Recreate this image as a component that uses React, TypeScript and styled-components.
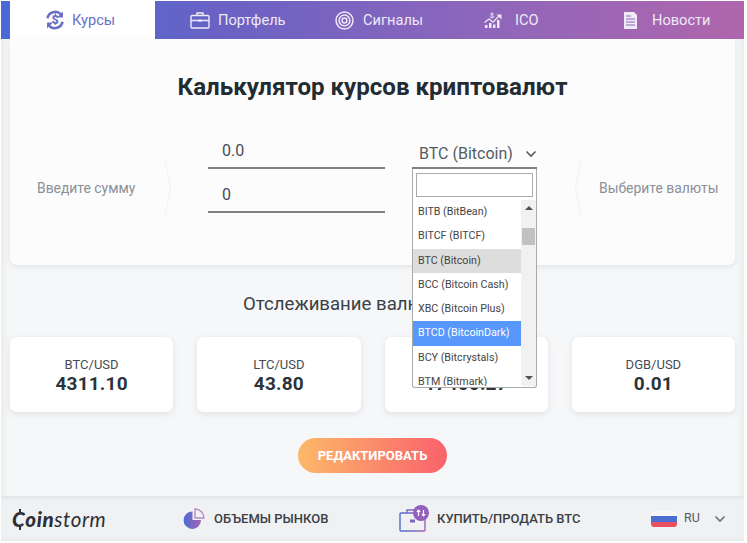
import styled, { createGlobalStyle } from 'styled-components';

const GlobalStyle = createGlobalStyle`
  html, body {
    margin: 0;
    padding: 0;
    background: #fff;
    font-family: Roboto, "Noto Sans", sans-serif;
  }
`;

const Page = styled.div`
  width: 748px;
  height: 543px;
  box-sizing: border-box;
  padding: 1px 3px 2px 1px;
  overflow: hidden;
  border-right: 1px solid #d4d6d8;
`;

const Frame = styled.div`
  height: 100%;
  display: flex;
  flex-direction: column;
  background: #f6f7f8;
  box-shadow: inset 9px 0 6px -6px #e9ebec, inset -9px 0 6px -6px #e9ebec;
`;

const Nav = styled.nav`
  display: flex;
  height: 38px;
  flex: none;
  padding-left: 9px;
  background: linear-gradient(90deg, #4a6ad6 0%, #6a62c4 30%, #8e66bb 65%, #b066ac 100%);
`;

const Tab = styled.div<{ $active?: boolean; $gap: number; $pad?: number }>`
  width: 145px;
  box-sizing: border-box;
  display: flex;
  align-items: center;
  gap: ${(p) => p.$gap}px;
  padding-left: ${(p) => p.$pad ?? 35}px;
  font-size: 14.6px;
  color: ${(p) => (p.$active ? '#6a70c8' : '#f0e9f6')};
  background: ${(p) => (p.$active ? '#fff' : 'transparent')};
`;

const Card = styled.section`
  margin: 0 9px;
  height: 226px;
  flex: none;
  box-sizing: border-box;
  padding-top: 34px;
  background: #fcfcfd;
  border-radius: 0 0 7px 7px;
  box-shadow: 0 2px 5px rgba(120, 130, 140, 0.16);
`;

const Title = styled.h1`
  margin: 0 0 24px;
  text-align: center;
  font-size: 24.1px;
  line-height: 28px;
  font-weight: 700;
  color: #232b33;
`;

const CalcRow = styled.div`
  display: flex;
  align-items: flex-start;
  height: 85px;
`;

const Hint = styled.div<{ $width: number; $pad: number }>`
  width: ${(p) => p.$width}px;
  flex: none;
  box-sizing: border-box;
  padding-left: ${(p) => p.$pad}px;
  margin-top: 54px;
  font-size: 13.9px;
  line-height: 18px;
  color: #8b9197;
  white-space: nowrap;
`;

const Divider = styled.svg<{ $after: number }>`
  flex: none;
  margin-top: 36px;
  margin-right: ${(p) => p.$after}px;
`;

const Inputs = styled.div`
  width: 177px;
  flex: none;
  margin-right: 27px;
`;

const NumberField = styled.div`
  height: 44px;
  box-sizing: border-box;
  padding: 15px 0 0 14px;
  font-size: 16px;
  line-height: 22px;
  color: #454c53;
  border-bottom: 2px solid #7c8184;
`;

const SelectWrap = styled.div`
  position: relative;
  width: 125px;
  flex: none;
  margin-right: 38px;
`;

const SelectValue = styled.div`
  height: 44px;
  box-sizing: border-box;
  display: flex;
  align-items: center;
  justify-content: space-between;
  padding: 15px 0 0 7px;
  font-size: 16px;
  color: #555b60;
  border-bottom: 2px solid #7c8184;
`;

const Dropdown = styled.div`
  position: absolute;
  top: 44px;
  left: 0;
  width: 125px;
  height: 219px;
  box-sizing: border-box;
  background: #fff;
  border: 1px solid #aaa;
  border-top: 0;
  border-radius: 0 0 3px 3px;
  overflow: hidden;
  z-index: 5;
`;

const Search = styled.div`
  height: 24px;
  margin: 4px 3px 3px;
  box-sizing: border-box;
  border: 1px solid #aaa;
  background: #fff;
`;

const ListArea = styled.div`
  display: flex;
  height: 186px;
`;

const List = styled.ul`
  flex: 1;
  margin: 0;
  padding: 0;
  list-style: none;
  overflow: hidden;
`;

const Option = styled.li<{ $state?: 'selected' | 'hover' }>`
  height: 24.3px;
  line-height: 24.3px;
  padding-left: 5px;
  font-size: 10.7px;
  white-space: nowrap;
  color: ${(p) => (p.$state === 'hover' ? '#fff' : '#444')};
  background: ${(p) =>
    p.$state === 'hover' ? '#5897fb' : p.$state === 'selected' ? '#ddd' : 'transparent'};
`;

const Scrollbar = styled.div`
  position: relative;
  width: 15px;
  flex: none;
  background: #f1f1f1;
`;

const Thumb = styled.div`
  position: absolute;
  top: 28px;
  left: 1px;
  width: 13px;
  height: 17px;
  background: #c1c1c1;
`;

const ArrowUp = styled.div`
  position: absolute;
  top: 6px;
  left: 4px;
  border: 4px solid transparent;
  border-top: 0;
  border-bottom: 4px solid #505050;
`;

const ArrowDown = styled.div`
  position: absolute;
  bottom: 6px;
  left: 4px;
  border: 4px solid transparent;
  border-bottom: 0;
  border-top: 4px solid #505050;
`;

const Heading = styled.h2`
  margin: 27px 0 0;
  text-align: center;
  font-size: 18.6px;
  line-height: 24px;
  font-weight: 400;
  color: #3a4047;
`;

const Pairs = styled.div`
  display: grid;
  grid-template-columns: repeat(4, 1fr);
  gap: 24px;
  margin: 21px 9px 0;
`;

const Pair = styled.div`
  height: 75px;
  box-sizing: border-box;
  padding-top: 21px;
  text-align: center;
  background: #fff;
  border-radius: 7px;
  box-shadow: 0 2px 7px rgba(120, 135, 150, 0.18);
`;

const PairName = styled.div`
  font-size: 13px;
  line-height: 14px;
  color: #454c53;
`;

const PairValue = styled.div`
  font-size: 19px;
  line-height: 24px;
  font-weight: 700;
  color: #2c333a;
  letter-spacing: 0.2px;
`;

const EditButton = styled.button`
  display: block;
  width: 149px;
  height: 35px;
  margin: 26px auto 0;
  padding: 0;
  border: 0;
  border-radius: 18px;
  font-family: inherit;
  font-size: 13px;
  font-weight: 700;
  color: #fff;
  background: linear-gradient(90deg, #fdb869 0%, #f9626c 100%);
`;

const Footer = styled.footer`
  flex: none;
  display: flex;
  align-items: center;
  height: 45px;
  margin-top: 23px;
  padding-left: 11px;
  background: #f0f1f2;
  box-shadow: inset 0 5px 5px -3px #e0e2e4, inset 0 -4px 4px -3px #e3e5e6;
`;

const Logo = styled.div`
  width: 171px;
  flex: none;
  font-family: Lato, Roboto, sans-serif;
  font-size: 20.5px;
  font-style: italic;
  color: #2c3036;
  font-weight: 400;
  letter-spacing: 0.6px;

  b {
    font-weight: 900;
  }
`;

const LogoC = styled.span`
  position: relative;

  &::before,
  &::after {
    content: '';
    position: absolute;
    left: 7px;
    width: 2px;
    height: 3px;
    background: #2c3036;
  }

  &::before {
    top: 2px;
  }

  &::after {
    bottom: 1px;
  }
`;

const FootLink = styled.div<{ $width: number; $gap: number }>`
  width: ${(p) => p.$width}px;
  flex: none;
  display: flex;
  align-items: center;
  gap: ${(p) => p.$gap}px;
  font-size: 13px;
  font-weight: 500;
  color: #3a3f45;
  white-space: nowrap;
`;

const Lang = styled.div`
  display: flex;
  align-items: center;
  font-size: 12.5px;
  color: #555b62;
`;

const LangCode = styled.span`
  margin: -3px 14px 0 7px;
`;

const Flag = styled.div`
  width: 26px;
  height: 16px;
  border-radius: 3px;
  overflow: hidden;
  background: linear-gradient(#f7f7f9 0 33%, #4a6fd0 33% 66%, #e8505f 66%);
`;

const TabIcon = styled.svg`
  flex: none;
  display: block;
`;

const Chevron = ({ color, size }: { color: string; size: number }) => (
  <TabIcon width={size} height={size} viewBox="0 0 12 12" fill="none" stroke={color} strokeWidth="1.6">
    <path d="M1.5 3.5 6 8l4.5-4.5" />
  </TabIcon>
);

const ExchangeIcon = () => (
  <TabIcon width="20" height="20" viewBox="0 0 20 20" fill="none" stroke="#6a70c8" strokeWidth="2.6">
    <path d="M2.5 8.2A7.8 7.8 0 0 1 15.8 4.2" />
    <path d="M17.5 11.8A7.8 7.8 0 0 1 4.2 15.8" />
    <path d="M18 1.5v6h-6zM2 18.5v-6h6z" fill="#6a70c8" stroke="none" />
    <text x="10" y="14.4" textAnchor="middle" fontSize="12.5" fontWeight="900" fill="#6a70c8" stroke="none" fontFamily="Roboto">$</text>
  </TabIcon>
);

const CaseIcon = () => (
  <TabIcon width="20" height="17" viewBox="0 0 20 17" fill="none" stroke="#f0e9f6" strokeWidth="1.4">
    <rect x="1" y="3.5" width="18" height="12.5" rx="1" />
    <path d="M1 8.5h18M7 3.5V1h6v2.5" />
    <rect x="8.5" y="7.5" width="3" height="2.2" fill="#f0e9f6" stroke="none" />
  </TabIcon>
);

const TargetIcon = () => (
  <TabIcon width="19" height="19" viewBox="0 0 19 19" fill="none" stroke="#f0e9f6" strokeWidth="1.5">
    <circle cx="9.5" cy="9.5" r="8.5" />
    <circle cx="9.5" cy="9.5" r="5.4" />
    <circle cx="9.5" cy="9.5" r="2.4" />
  </TabIcon>
);

const GrowthIcon = () => (
  <TabIcon width="18" height="17" viewBox="0 0 18 17" fill="#f0e9f6">
    <path d="M1 16v-3h2.5v3zM5 16v-5h2.5v5zM9 16v-3.5h2.5V16zM13 16V8h2.5v8z" />
    <path d="M.5 10.5 5 7l4 3.2L15 4" fill="none" stroke="#f0e9f6" strokeWidth="1.3" />
    <path d="M12.5 2.5H17.5V7.5z" />
    <text x="8" y="6" textAnchor="middle" fontSize="7" fontWeight="700" fontFamily="Roboto">$</text>
  </TabIcon>
);

const NewsIcon = () => (
  <TabIcon width="13" height="17" viewBox="0 0 13 17">
    <path d="M0 0h10l3 3v14H0z" fill="#f0e9f6" />
    <path d="M2 4h5M2 7h9M2 10h9M2 13h9" stroke="#8f66bb" strokeWidth="1" />
  </TabIcon>
);

const Separator = ({ flip, after }: { flip?: boolean; after: number }) => (
  <Divider $after={after} width="6" height="54" viewBox="0 0 6 54" fill="none" stroke="#eef0f1" strokeWidth="1">
    <path d={flip ? 'M5.5 0 .5 27l5 27' : 'M.5 0l5 27-5 27'} />
  </Divider>
);

const PieIcon = () => (
  <TabIcon width="22" height="22" viewBox="0 0 22 22">
    <defs>
      <linearGradient id="pie" x1="0" y1="0" x2="1" y2="0">
        <stop offset="0" stopColor="#4f6ad4" />
        <stop offset="1" stopColor="#a366b0" />
      </linearGradient>
    </defs>
    <path d="M9.5 3.5V12H18A8.7 8.7 0 1 1 9.5 3.5z" fill="url(#pie)" />
    <path d="M12 1a9 9 0 0 1 9 9h-9z" fill="none" stroke="#b58ac6" strokeWidth="1.4" />
  </TabIcon>
);

const BuyIcon = () => (
  <TabIcon width="30" height="28" viewBox="0 0 30 28">
    <defs>
      <linearGradient id="buy" x1="0" y1="0" x2="1" y2="0">
        <stop offset="0" stopColor="#4f6ad4" />
        <stop offset="1" stopColor="#a366b0" />
      </linearGradient>
    </defs>
    <rect x="1" y="8" width="25" height="18" rx="1" fill="none" stroke="url(#buy)" strokeWidth="1.4" />
    <path d="M1 16h10M16 16h10" fill="none" stroke="url(#buy)" strokeWidth="1.4" />
    <rect x="11" y="14.5" width="5" height="3" fill="#7a68c0" />
    <path d="M8 8V5h10" fill="none" stroke="#7a68c0" strokeWidth="1.4" />
    <circle cx="22" cy="8" r="8" fill="#9360bb" />
    <path d="M19.5 5v6M17.8 6.8l1.7-1.8 1.7 1.8M24.5 11V5M22.8 9.2l1.7 1.8 1.7-1.8" fill="none" stroke="#fff" strokeWidth="1.2" />
  </TabIcon>
);

const options = [
  { label: 'BITB (BitBean)' },
  { label: 'BITCF (BITCF)' },
  { label: 'BTC (Bitcoin)', state: 'selected' as const },
  { label: 'BCC (Bitcoin Cash)' },
  { label: 'XBC (Bitcoin Plus)' },
  { label: 'BTCD (BitcoinDark)', state: 'hover' as const },
  { label: 'BCY (Bitcrystals)' },
  { label: 'BTM (Bitmark)' },
];

const pairs = [
  { name: 'BTC/USD', value: '4311.10' },
  { name: 'LTC/USD', value: '43.80' },
  { name: 'XMR/USD', value: '17400.27' },
  { name: 'DGB/USD', value: '0.01' },
];

export default function App() {
  return (
    <>
      <GlobalStyle />
      <Page>
        <Frame>
          <Nav>
            <Tab $active $gap={7}>
              <ExchangeIcon />
              Курсы
            </Tab>
            <Tab $gap={8}>
              <CaseIcon />
              Портфель
            </Tab>
            <Tab $gap={9}>
              <TargetIcon />
              Сигналы
            </Tab>
            <Tab $gap={13} $pad={39}>
              <GrowthIcon />
              ICO
            </Tab>
            <Tab $gap={15} $pad={34}>
              <NewsIcon />
              Новости
            </Tab>
          </Nav>

          <Card>
            <Title>Калькулятор курсов криптовалют</Title>
            <CalcRow>
              <Hint $width={155} $pad={27}>
                Введите сумму
              </Hint>
              <Separator after={37} />
              <Inputs>
                <NumberField>0.0</NumberField>
                <NumberField>0</NumberField>
              </Inputs>
              <SelectWrap>
                <SelectValue>
                  BTC (Bitcoin)
                  <Chevron color="#555b60" size={12} />
                </SelectValue>
                <Dropdown>
                  <Search />
                  <ListArea>
                    <List>
                      {options.map((o) => (
                        <Option key={o.label} $state={o.state}>
                          {o.label}
                        </Option>
                      ))}
                    </List>
                    <Scrollbar>
                      <ArrowUp />
                      <Thumb />
                      <ArrowDown />
                    </Scrollbar>
                  </ListArea>
                </Dropdown>
              </SelectWrap>
              <Separator flip after={18} />
              <Hint $width={130} $pad={0}>
                Выберите валюты
              </Hint>
            </CalcRow>
          </Card>

          <Heading>Отслеживание валютных пар</Heading>

          <Pairs>
            {pairs.map((p) => (
              <Pair key={p.name}>
                <PairName>{p.name}</PairName>
                <PairValue>{p.value}</PairValue>
              </Pair>
            ))}
          </Pairs>

          <EditButton>РЕДАКТИРОВАТЬ</EditButton>

          <Footer>
            <Logo>
              <b>
                <LogoC>C</LogoC>oin
              </b>
              storm
            </Logo>
            <FootLink $width={216} $gap={9}>
              <PieIcon />
              ОБЪЕМЫ РЫНКОВ
            </FootLink>
            <FootLink $width={252} $gap={8}>
              <BuyIcon />
              КУПИТЬ/ПРОДАТЬ BTC
            </FootLink>
            <Lang>
              <Flag />
              <LangCode>RU</LangCode>
              <Chevron color="#6c7177" size={12} />
            </Lang>
          </Footer>
        </Frame>
      </Page>
    </>
  );
}
